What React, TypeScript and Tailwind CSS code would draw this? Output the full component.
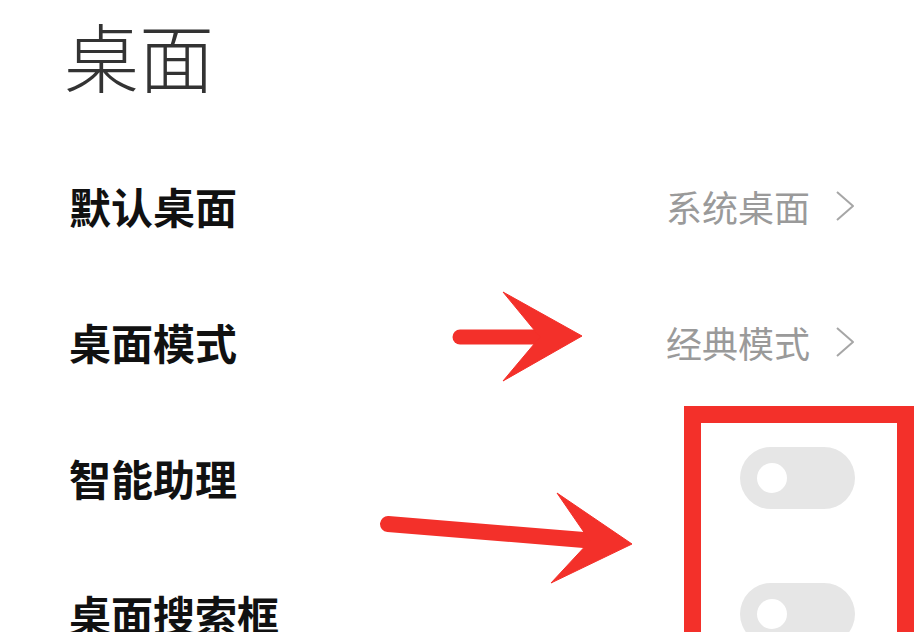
const font = { fontFamily: '"Noto Sans CJK SC", "Noto Sans", sans-serif' };

const Chevron = () => (
  <svg width="20" height="32" viewBox="0 0 20 32" fill="none">
    <polyline points="2,2 18,16 2,30" stroke="#a6a6a6" strokeWidth="2" strokeLinejoin="round" />
  </svg>
);

const LinkRow = ({ label, value }: { label: string; value: string }) => (
  <div className="flex h-[136px] items-center justify-between pl-[69px] pr-[68px]">
    <span className="text-[42px] font-bold leading-tight text-[#111]">{label}</span>
    <div className="flex items-center gap-[25px]">
      <span className="text-[36px] leading-tight text-[#9a9a9a]">{value}</span>
      <Chevron />
    </div>
  </div>
);

const ToggleRow = ({ label }: { label: string }) => (
  <div className="flex h-[136px] items-center justify-between pl-[69px] pr-[68px]">
    <span className="text-[42px] font-bold leading-tight text-[#111]">{label}</span>
    <div className="flex h-[62px] w-[115px] items-center rounded-full bg-[#e6e6e6] pl-[17px]">
      <div className="h-[30px] w-[30px] rounded-full bg-white" />
    </div>
  </div>
);

const App = () => {
  return (
    <div className="relative h-[632px] w-[923px] overflow-hidden bg-white" style={font}>
      <div className="flex h-[138px] items-start pl-[64px] pt-[8px]">
        <h1 className="text-[75px] font-light leading-tight text-[#333]">桌面</h1>
      </div>
      <LinkRow label="默认桌面" value="系统桌面" />
      <LinkRow label="桌面模式" value="经典模式" />
      <ToggleRow label="智能助理" />
      <ToggleRow label="桌面搜索框" />

      {/* red annotations */}
      <div className="absolute left-[684px] top-[406px] h-[260px] w-[230px] border-[17px] border-[#f3302a]" />
      <svg className="absolute left-0 top-0" width="923" height="632" viewBox="0 0 923 632">
        <g fill="#f3302a" stroke="#f3302a">
          <line x1="460" y1="337" x2="548" y2="337" strokeWidth="15" strokeLinecap="round" />
          <polygon points="503,292 582,336 503,381 540,337" strokeWidth="1" />
          <line x1="388" y1="524" x2="596" y2="541" strokeWidth="16" strokeLinecap="round" />
          <polygon points="557,493 632,544 551,583 590,541" strokeWidth="1" />
        </g>
      </svg>
    </div>
  );
};

export default App;
